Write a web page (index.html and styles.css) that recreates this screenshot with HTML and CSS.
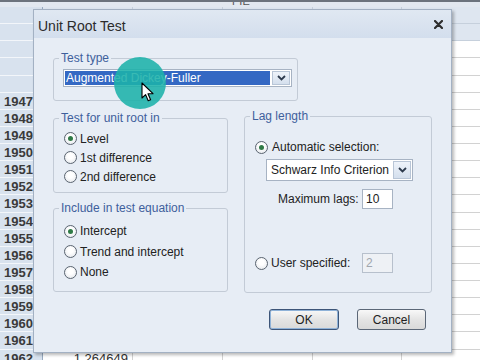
FILE: index.html
```html
<!DOCTYPE html>
<html>
<head>
<meta charset="utf-8">
<title>Unit Root Test</title>
<link rel="stylesheet" href="styles.css">
</head>
<body>
<div class="screen">
  <div class="topbar"><span class="pie">PIE</span></div>
  <div class="sheet">
    <div class="rh"></div><div class="hc"></div><div class="hc"></div><div class="hc"></div><div class="hc"></div><div class="hc"></div>
    <div class="rh"></div><div class="hc"></div><div class="hc"></div><div class="hc"></div><div class="hc"></div><div class="hc"></div>
    <div class="rh"></div><div class="c"></div><div class="c"></div><div class="c"></div><div class="c"></div><div class="c"></div>
    <div class="rh"></div><div class="c"></div><div class="c"></div><div class="c"></div><div class="c"></div><div class="c"></div>
    <div class="rh"></div><div class="c"></div><div class="c"></div><div class="c"></div><div class="c"></div><div class="c"></div>
    <div class="rh">1947</div><div class="c"></div><div class="c"></div><div class="c"></div><div class="c"></div><div class="c"></div>
    <div class="rh">1948</div><div class="c"></div><div class="c"></div><div class="c"></div><div class="c"></div><div class="c"></div>
    <div class="rh">1949</div><div class="c"></div><div class="c"></div><div class="c"></div><div class="c"></div><div class="c"></div>
    <div class="rh">1950</div><div class="c"></div><div class="c"></div><div class="c"></div><div class="c"></div><div class="c"></div>
    <div class="rh">1951</div><div class="c"></div><div class="c"></div><div class="c"></div><div class="c"></div><div class="c"></div>
    <div class="rh">1952</div><div class="c"></div><div class="c"></div><div class="c"></div><div class="c"></div><div class="c"></div>
    <div class="rh">1953</div><div class="c"></div><div class="c"></div><div class="c"></div><div class="c"></div><div class="c"></div>
    <div class="rh">1954</div><div class="c"></div><div class="c"></div><div class="c"></div><div class="c"></div><div class="c"></div>
    <div class="rh">1955</div><div class="c"></div><div class="c"></div><div class="c"></div><div class="c"></div><div class="c"></div>
    <div class="rh">1956</div><div class="c"></div><div class="c"></div><div class="c"></div><div class="c"></div><div class="c"></div>
    <div class="rh">1957</div><div class="c"></div><div class="c"></div><div class="c"></div><div class="c"></div><div class="c"></div>
    <div class="rh">1958</div><div class="c"></div><div class="c"></div><div class="c"></div><div class="c"></div><div class="c"></div>
    <div class="rh">1959</div><div class="c"></div><div class="c"></div><div class="c"></div><div class="c"></div><div class="c"></div>
    <div class="rh">1960</div><div class="c"></div><div class="c"></div><div class="c"></div><div class="c"></div><div class="c"></div>
    <div class="rh">1961</div><div class="c"></div><div class="c"></div><div class="c"></div><div class="c"></div><div class="c"></div>
    <div class="rh">1962</div><div class="c">1.264649</div><div class="c"></div><div class="c"></div><div class="c"></div><div class="c"></div>
  </div>

  <div class="dialog">
    <div class="titlebar">
      <span class="title">Unit Root Test</span>
      <svg class="close" width="9" height="9" viewBox="0 0 9 9"><path d="M1 1 L8 8 M8 1 L1 8" stroke="#2e2e2e" stroke-width="2.2" stroke-linecap="round"/></svg>
    </div>
    <div class="dbody">
      <fieldset class="grp grp-type">
        <legend>Test type</legend>
        <div class="combo sel">
          <span class="val">Augmented Dickey-Fuller</span>
          <span class="drop"><svg width="9" height="6" viewBox="0 0 9 6"><path d="M1 1 L4.5 4.5 L8 1" fill="none" stroke="#2d3a4d" stroke-width="1.8"/></svg></span>
        </div>
      </fieldset>

      <div class="cols">
        <div class="leftcol">
          <fieldset class="grp grp-unit">
            <legend>Test for unit root in</legend>
            <div class="radio"><span class="dot on"></span>Level</div>
            <div class="radio"><span class="dot"></span>1st difference</div>
            <div class="radio"><span class="dot"></span>2nd difference</div>
          </fieldset>
          <fieldset class="grp grp-incl">
            <legend>Include in test equation</legend>
            <div class="radio"><span class="dot on"></span>Intercept</div>
            <div class="radio"><span class="dot"></span>Trend and intercept</div>
            <div class="radio"><span class="dot"></span>None</div>
          </fieldset>
        </div>

        <fieldset class="grp grp-lag">
          <legend>Lag length</legend>
          <div class="radio auto"><span class="dot on"></span>Automatic selection:</div>
          <div class="combo crit">
            <span class="val">Schwarz Info Criterion</span>
            <span class="drop"><svg width="9" height="6" viewBox="0 0 9 6"><path d="M1 1 L4.5 4.5 L8 1" fill="none" stroke="#2d3a4d" stroke-width="1.8"/></svg></span>
          </div>
          <div class="lagrow maxlags">
            <span class="lbl">Maximum lags:</span>
            <span class="field">10</span>
          </div>
          <div class="lagrow user">
            <span class="lbl radio"><span class="dot"></span>User specified:</span>
            <span class="field dis">2</span>
          </div>
        </fieldset>
      </div>

      <div class="buttons">
        <button class="btn def">OK</button>
        <button class="btn">Cancel</button>
      </div>
    </div>
  </div>

  <div class="spot"></div>
  <svg class="cursor" width="14" height="21" viewBox="0 0 14 21"><path d="M1 1 L1 16 L4.6 12.6 L7.2 18.8 L9.6 17.8 L7 11.7 L12 11.7 Z" fill="#fff" stroke="#000" stroke-width="1.1" stroke-linejoin="round"/></svg>
</div>
</body>
</html>
```

FILE: styles.css
```css
* { box-sizing: border-box; }
html, body { margin: 0; padding: 0; }
body {
  width: 480px;
  height: 360px;
  overflow: hidden;
  background: #fff;
  font-family: "Liberation Sans", Arial, sans-serif;
}
.screen {
  position: relative;
  width: 480px;
  height: 360px;
  overflow: hidden;
  background: #fff;
}

/* background spreadsheet */
.topbar {
  height: 7px;
  border-top: 2px solid #6c737d;
  background: #e2e8f0;
  overflow: hidden;
}
.pie {
  display: block;
  padding-left: 232px;
  margin-top: -7px;
  font-size: 11px;
  line-height: 12px;
  color: #555;
}
.sheet {
  display: grid;
  grid-template-columns: 43px 90px 90px 90px 89px 90px;
  grid-auto-rows: 17.13px;
}
.rh {
  background: #d8e2ee;
  border-bottom: 1px solid #f3f6fa;
  border-right: 1px solid #98aac0;
  font-weight: bold;
  font-size: 13px;
  line-height: 17px;
  color: #3a3a3a;
  padding-left: 4px;
}
.hc {
  background: #dee6f0;
  border-bottom: 1px solid #c6d0dc;
  border-right: 1px solid #c6d0dc;
}
.c {
  background: #fff;
  border-bottom: 1px solid #d2d2d2;
  border-right: 1px solid #d2d2d2;
  font-size: 13px;
  line-height: 17px;
  text-align: right;
  padding-right: 4px;
  color: #333;
}

/* dialog window */
.dialog {
  position: absolute;
  left: 33px;
  top: 9px;
  width: 419px;
  height: 344px;
  background: #e7edf5;
  border: 1px solid #a3b1c3;
  box-shadow: 2px 2px 3px rgba(0, 0, 0, 0.28);
  display: flex;
  flex-direction: column;
}
.titlebar {
  height: 28px;
  flex: none;
  background: linear-gradient(#e0e8f2, #d3deed);
  display: flex;
  align-items: center;
  justify-content: space-between;
  padding: 3px 8px 0 4px;
}
.title {
  font-size: 14px;
  color: #2b2b2b;
}
.close { display: block; margin-top: -2px; }

.dbody {
  flex: 1;
  padding: 13px 25px 0 19px;
  display: flex;
  flex-direction: column;
}

.grp {
  margin: 0;
  padding: 0;
  border: 1px solid #c3cbd6;
  border-radius: 3px;
  min-width: 0;
}
.grp legend {
  margin-left: 5px;
  padding: 0 2px;
  font-size: 12px;
  line-height: 14px;
  color: #3e609c;
}
.grp-type {
  width: 245px;
  height: 50px;
}

.combo {
  display: flex;
  border: 1px solid #a7b3c3;
  background: #fff;
  padding: 1px;
  font-size: 12px;
  color: #222;
}
.combo .val {
  flex: 1;
  padding-left: 1px;
  white-space: nowrap;
}
.drop {
  flex: none;
  width: 18px;
  background: linear-gradient(#eef3fa, #d4dfed);
  border: 1px solid #b8c5d6;
  display: flex;
  align-items: center;
  justify-content: center;
  margin-left: 2px;
}
.combo.sel {
  width: 229px;
  height: 18px;
  margin: 4px 0 0 9px;
}
.combo.sel .val {
  background: #3468c3;
  color: #fff;
  line-height: 14px;
}

.cols {
  margin-top: 8px;
  display: grid;
  grid-template-columns: 175px 188px;
  column-gap: 16px;
  align-items: start;
}
.leftcol {
  padding-top: 2px;
  display: flex;
  flex-direction: column;
  gap: 8px;
}
.grp-unit { height: 82px; padding-top: 4px; }
.grp-incl { height: 91px; padding-top: 6px; }
.grp-unit .radio { height: 19px; }
.grp-incl .radio { height: 20.5px; }

.radio {
  display: flex;
  align-items: center;
  font-size: 12px;
  color: #222;
  white-space: nowrap;
}
.leftcol .radio { padding-left: 10px; }
.dot {
  flex: none;
  width: 13px;
  height: 13px;
  border-radius: 50%;
  border: 1px solid #5a6470;
  background: radial-gradient(circle at 50% 40%, #ffffff 30%, #dfe3e8 100%);
  margin-right: 3px;
  display: flex;
  align-items: center;
  justify-content: center;
}
.dot.on::after {
  content: "";
  width: 5px;
  height: 5px;
  border-radius: 50%;
  background: #2f7a45;
}

.grp-lag { height: 184px; }
.radio.auto {
  height: 18px;
  margin-top: 15px;
  padding-left: 10px;
}
.radio.auto .dot { margin-right: 4px; }
.combo.crit {
  width: 147px;
  height: 22px;
  margin: 3px 0 0 21px;
  line-height: 18px;
}
.combo.crit .val { padding-left: 3px; }
.lagrow {
  display: flex;
  align-items: center;
  font-size: 12px;
  color: #222;
}
.lagrow .lbl {
  width: 117px;
  flex: none;
}
.maxlags { margin-top: 8px; height: 20px; }
.maxlags .lbl { padding-left: 33px; }
.user { margin-top: 44px; height: 20px; }
.user .lbl { padding-left: 10px; }
.field {
  width: 31px;
  height: 20px;
  border: 1px solid #a7b3c3;
  background: #fff;
  font-size: 12px;
  line-height: 18px;
  padding-left: 3px;
  color: #222;
}
.field.dis {
  background: #eef1f5;
  color: #a0a6ae;
  border-color: #b7c0cc;
}

.buttons {
  margin-top: 16px;
  display: flex;
  justify-content: flex-end;
  gap: 18px;
}
.btn {
  width: 69px;
  height: 21px;
  border: 1px solid #5b6777;
  border-radius: 3px;
  background: linear-gradient(#f8f8f8, #e4e4e4 50%, #d9d9d9);
  font-family: "Liberation Sans", Arial, sans-serif;
  font-size: 12px;
  color: #222;
  padding: 0;
}
.btn.def {
  width: 70px;
  border-color: #3d5578;
  box-shadow: inset 0 0 0 1px #8fb2d8;
}

/* recording highlight + pointer */
.spot {
  position: absolute;
  left: 114px;
  top: 57px;
  width: 52px;
  height: 52px;
  border-radius: 50%;
  background: rgba(28, 178, 170, 0.88);
}
.cursor {
  position: absolute;
  left: 141px;
  top: 82px;
}
```
